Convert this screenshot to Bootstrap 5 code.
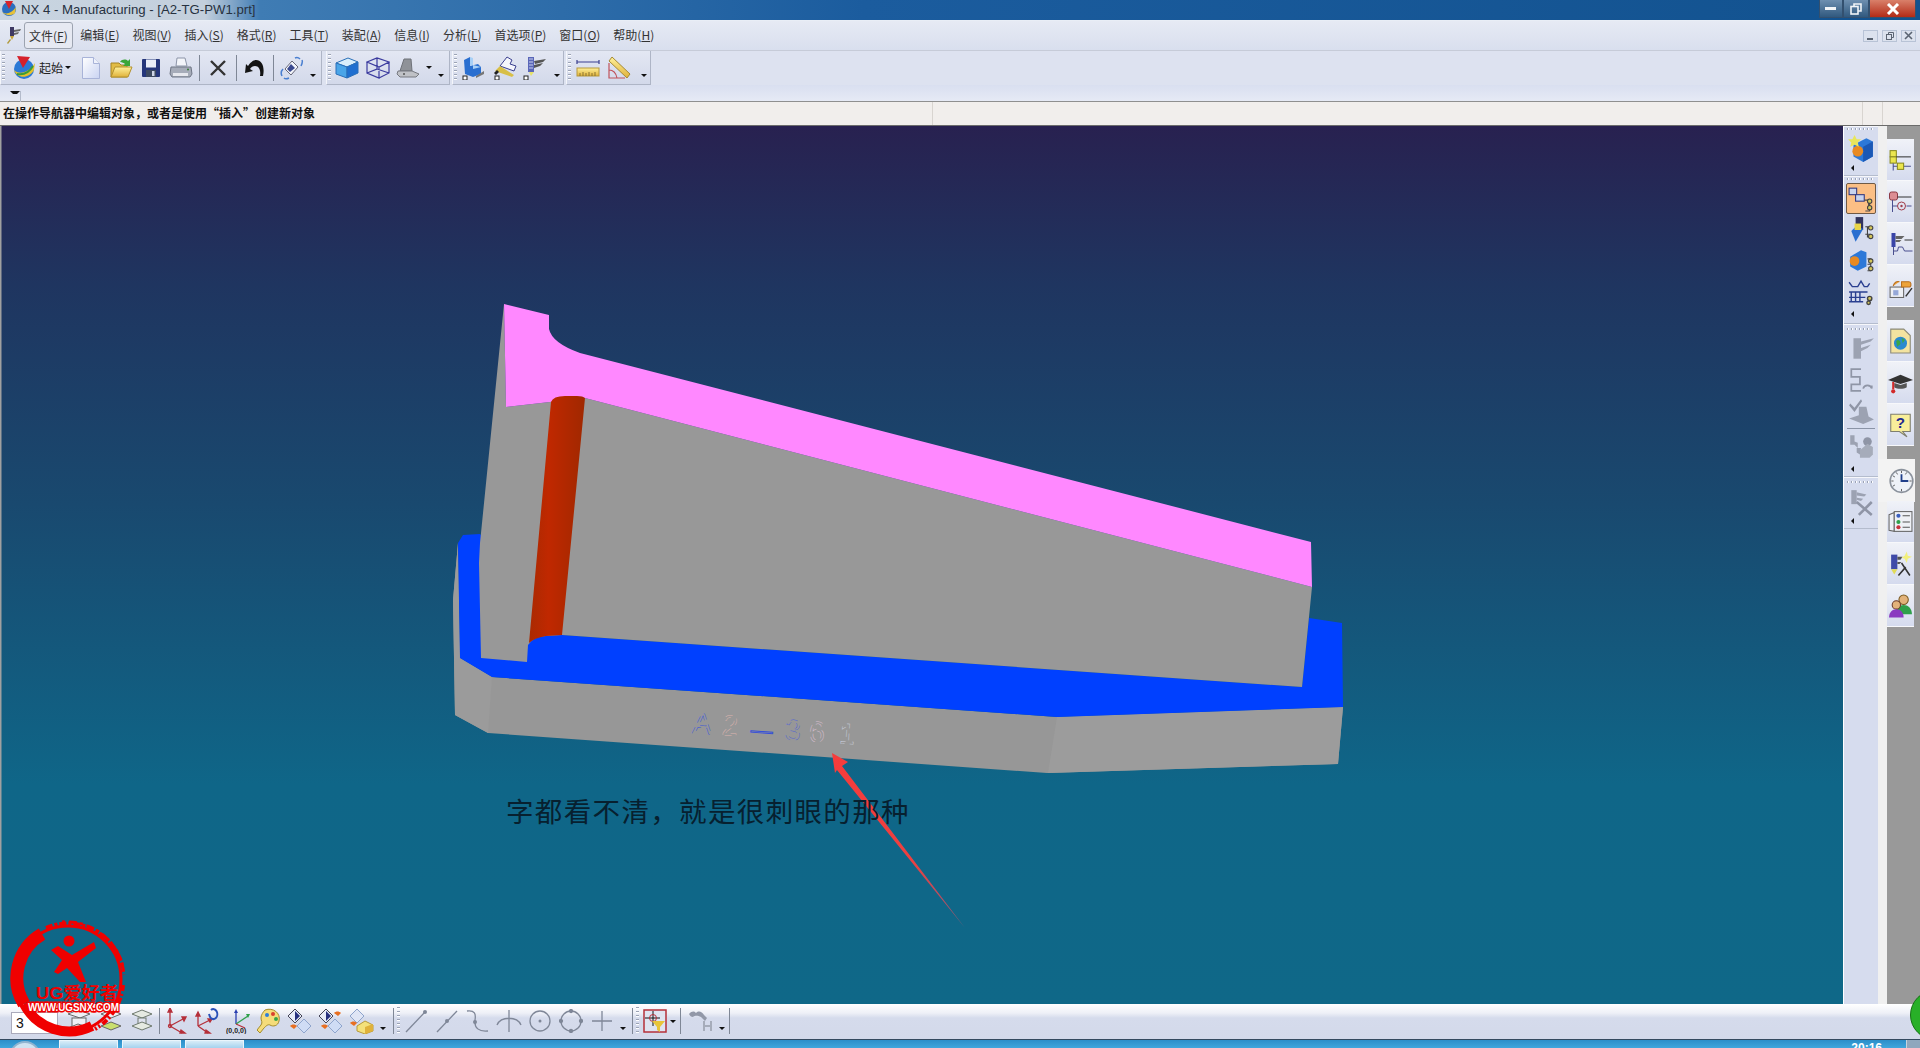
<!DOCTYPE html>
<html lang="zh-CN">
<head>
<meta charset="utf-8">
<title>NX 4 - Manufacturing</title>
<link href="https://cdn.jsdelivr.net/npm/bootstrap@5.3.0/dist/css/bootstrap.min.css" rel="stylesheet">
<style>
    html, body { height: 100%; overflow: hidden; }
    body { font-family: "Liberation Sans", "Noto Sans CJK SC", sans-serif; font-size: 12px; color: #222; background: #dfe4f1; }
    .app-shell { height: 1048px; position: relative; overflow: hidden; }

    .title-strip { height: 21px; flex: none; border-bottom: 1px solid #e9eef6; padding-left: 1px; background: linear-gradient(90deg, #c9d5e1 0, #c3cfdc 205px, #3f7cb4 260px, #1b5c9e 45%, #12528f 100%); font-size: 13.2px; color: #26313f; line-height: 20px; }
    .win-ctl { height: 18px; display: flex; align-items: center; justify-content: center; border: 1px solid #33506f; border-top: 0; }
    .win-min { width: 24px; background: linear-gradient(#6d8fb0, #31597f); }
    .win-max { width: 26px; background: linear-gradient(#6d8fb0, #31597f); }
    .win-close { width: 47px; background: linear-gradient(#d9806a, #b32b17); }

    .menu-strip { height: 29px; flex: none; background: linear-gradient(#e6eaf4, #d9dfee); padding: 0 4px 0 5px !important; font-family: "Noto Sans CJK SC", sans-serif; }
    .menu-strip .navbar-nav .nav-link { font-size: 12px; padding: 3px 5.500px; color: #333; line-height: 17px; border: 1px solid transparent; white-space: nowrap; }
    .menu-strip .navbar-nav .nav-link.is-open { border-color: #9ca3b0; border-radius: 3px; background: #e6e9f2; padding: 4px 4px; margin-right: 1px; }
    .nx-mark { margin-right: 2px; }
    .mdi-ctl { width: 15px; height: 12px; border: 1px solid #b8c3d6; background: #dce2ee; display: flex; align-items: center; justify-content: center; margin-left: 4px; }

    .tool-row { height: 35px; flex: none; background: #dde2f0; border-top: 1px solid #c6cbd8; }
    .tool-group { height: 34px; background: linear-gradient(#e3e7f3, #d3d9ea); border-right: 1px solid #aeb5c6; border-bottom: 1px solid #aeb5c6; border-left: 1px solid #f4f6fb; }
    .group-std { width: 322px; margin-right: 4px; }
    .group-view { width: 124px; margin-right: 2px; }
    .group-cam { width: 112px; margin-right: 2px; }
    .group-meas { width: 85px; }
    .tb-grip { width: 3px; height: 28px; flex: none; margin: 0 1px 0 1px; background: repeating-linear-gradient(#9ba3b5 0 1px, #ffffff 1px 2px, transparent 2px 4px); }
    .tb-cell { width: 30px; height: 30px; flex: none; display: flex; align-items: center; justify-content: center; }
    .tb-cell.wide { width: 31px; }
    .tb-sep { width: 1px; min-height: 26px; height: 26px; flex: none; align-self: center; margin: 0 3px; background: #7f8796; opacity: 1; }
    .tb-more { width: 12px; height: 30px; flex: none; display: flex; align-items: flex-end; justify-content: center; padding-bottom: 6px; }
    .tb-more i, .tb-drop i { display: block; border-left: 3px solid transparent; border-right: 3px solid transparent; border-top: 3px solid #111; }
    .tb-drop { width: 12px; height: 30px; flex: none; display: flex; align-items: center; justify-content: center; }
    .tb-drop.narrow { width: 10px; margin-right: 3px; }
    .globe-ic { margin-left: 6px; flex: none; }
    .tb-label { font-family: "Noto Sans CJK SC", sans-serif; font-size: 12px; color: #222; margin-left: 3px; white-space: nowrap; width: 24px; flex: none; }

    .tool-row-2 { height: 16px; flex: none; background: linear-gradient(#d9dff0, #e6eaf5); border-bottom: 1px solid #8f8f8f; box-sizing: content-box; }
    .tiny-tile { width: 21px; height: 16px; border-right: 1px solid #b4bbcb; padding-left: 4px; }
    .tiny-tile i { display: block; margin: 6px 0 0 6px; border-left: 3px solid transparent; border-right: 3px solid transparent; border-top: 3px solid #111; }

    .hint-strip { height: 23px; flex: none; background: #f1eeec; font-family: "Noto Sans CJK SC", sans-serif; font-weight: 700; font-size: 12px; color: #111; line-height: 22px; padding-left: 3px; border-bottom: 1px solid #6b6b6b; box-sizing: content-box; }
    .hint-main { width: 929px; }
    .hint-cell { border-left: 1px solid #d8d4d0; height: 23px; font-weight: 400; }
    .hint-cell-a { width: 930px; }
    .hint-cell-b { width: 20px; }

    .work-area { height: 878px; flex: none; min-height: 0; }
    .view-pane { width: 1843px; height: 878px; flex: none; display: block; }
    .op-strip { width: 35px; flex: none; background: #d6dcee; border-left: 1px solid #fff; }
    .op-group { border-bottom: 1px solid #b4bccd; border-top: 1px solid #f6f7fb; padding: 1px 0 3px; }
    .op-group.is-cam { padding-bottom: 5px; }
    .op-group.is-idle { padding-top: 3px; }
    .op-group.is-last { padding-top: 3px; }
    .op-grip { height: 2px; margin: 0 3px 3px; background: repeating-linear-gradient(90deg, #9ba3b5 0 1px, #fff 1px 2px, transparent 2px 4px); }
    .op-cell { height: 31px; display: flex; align-items: center; justify-content: center; }
    .op-cell svg { width: 26px; height: 28px; }
    .op-cell.is-on { margin: 3px 2px 0; background: #fbbf85; border: 1px solid #6f5a46; border-radius: 2px; }
    .op-cell.nudge { margin-top: 1px; }
    .op-more { height: 8px; padding-left: 7px; display: flex; align-items: center; }
    .op-more.nudge { margin-top: 3px; }
    .op-more i { display: block; border-top: 3px solid transparent; border-bottom: 3px solid transparent; border-right: 3px solid #111; }
    .op-line { height: 1px; background: #8a93a6; margin: 2px 3px; }
    .gap-col { width: 9px; flex: none; background: #f0f0f0; }
    .res-col { flex: 1 1 auto; background: #999999; padding-top: 13px; }
    .res-tab { width: 27px; height: 42px; display: flex; align-items: center; justify-content: center; background: linear-gradient(#f0f2f8, #d5dbee); border-bottom: 1px solid #f7f8fb; }
    .res-tab svg { width: 25px; height: 26px; }
    .res-gap { height: 13px; }
    .res-clock { width: 37px; height: 43px; background: #f3f3f3; margin-left: -9px; padding-left: 9px; margin-bottom: -1px; border-bottom: 0; }

    .bottom-strip { height: 35px; flex: none; background: linear-gradient(#ffffff 0, #eef0f7 9px, #d5dbec 14px, #d3d9ea 100%); border-bottom: 1px solid #33495f; padding-left: 11px; box-sizing: content-box; }
    .count-box { width: 47px; height: 22px; border: 1px solid #aab; border-radius: 0; padding: 0 0 0 4px; font-size: 14px; line-height: 20px; color: #111; background: #fff; min-height: 0; margin: 0 6px 5px 0; flex: none; }
    .bt-row { margin-bottom: 3px; }
    .bt-cell { width: 31px; height: 30px; flex: none; display: flex; align-items: center; justify-content: center; }
    .bt-cell.snap { width: 25px; }
    .bt-grip { width: 3px; height: 28px; flex: none; margin: 0 0 0 3px; background: repeating-linear-gradient(#9ba3b5 0 1px, #ffffff 1px 2px, transparent 2px 4px); }
    .bt-grip.before-snap { margin-right: 3px; }
    .bt-more { height: 24px; padding-bottom: 3px; }
    .bt-sep-a { margin: 0 0 0 2px; }
    .bt-sep-b { margin: 0 0 0 4px; }
    .bt-sep-c { margin: 0 0 0 3px; }
    .bt-sep-d { margin: 0 4px 0 1px; }
    .bt-sep-e { margin: 0 0 0 1px; }

    .task-strip { height: 8px; flex: none; overflow: hidden; background: linear-gradient(#2b8ec9, #3fa6dc); position: relative; color: #fff; }
    .task-orb { width: 32px; height: 32px; margin: 1px 18px 0 9px; border-radius: 50%; background: #cfe3f1; border: 2px solid #8fb4d0; flex: none; }
    .task-item { width: 59px; height: 8px; margin-right: 4px; background: linear-gradient(#d8ecf8, #a5d2ee); border: 1px solid #eaf5fc; border-bottom: 0; }
    .clock-text { font-size: 12px; line-height: 12px; margin: 2px 24px 0 0; font-weight: 700; }
    .desk-tile { width: 14px; background: #8fa7bd; border-left: 1px solid #c6d4df; }

    .stamp { position: absolute; left: 8px; top: 915px; pointer-events: none; }
    .stamp text { font-family: "Liberation Sans", "Noto Sans CJK SC", sans-serif; font-weight: 700; }
    .stamp .stamp-url { paint-order: stroke; }
    .corner-dot { position: absolute; left: 1910px; top: 990px; width: 50px; height: 50px; background: #28b028; border: 1px solid #157015; }
    .view-note { font-family: "Noto Sans CJK SC", serif; font-size: 27.5px; letter-spacing: 1.35px; fill: #07202f; }
    .part-mark { font-family: "Liberation Sans", sans-serif; font-size: 29px; letter-spacing: 10px; fill: none; stroke-width: .5; stroke-dasharray: 7 5; }
    .part-mark .dash-solid { font-size: 22px; stroke-dasharray: none; stroke-width: .9; }
</style>
</head>
<body>
<svg width="0" height="0" class="position-absolute">
    <defs>
        <linearGradient id="gPage" x1="0" y1="0" x2="1" y2="1"><stop offset="0" stop-color="#ffffff"/><stop offset="1" stop-color="#c9d3f2"/></linearGradient>
        <linearGradient id="gGold" x1="0" y1="0" x2="0" y2="1"><stop offset="0" stop-color="#fff19a"/><stop offset="1" stop-color="#e0b23a"/></linearGradient>
        <linearGradient id="gRod" x1="0" y1="0" x2="1" y2="0"><stop offset="0" stop-color="#a92a02"/><stop offset=".35" stop-color="#c02800"/><stop offset="1" stop-color="#a02800"/></linearGradient>
        <linearGradient id="gSky" x1="0" y1="0" x2="0" y2="1"><stop offset="0" stop-color="#282150"/><stop offset=".18" stop-color="#1f3560"/><stop offset=".43" stop-color="#19496f"/><stop offset=".75" stop-color="#0f6688"/><stop offset="1" stop-color="#0f6888"/></linearGradient>
        <linearGradient id="gArrow" x1="0" y1="0" x2="1" y2="1"><stop offset="0" stop-color="#f63c3c"/><stop offset=".6" stop-color="#ee4040"/><stop offset="1" stop-color="#8d5a78"/></linearGradient>
    </defs>
</svg>

<div class="app-shell d-flex flex-column">
    <!-- title bar -->
    <div class="title-strip d-flex align-items-start">
        <svg width="16" height="18" viewBox="0 0 16 18"><path d="M1 9a7 7 0 0 1 14 0 7 7 0 0 1-14 0z" fill="#2b6fc0"/><path d="M1 12c4 3 10 1 14-5l-1 6c-3 3-9 3-13-1z" fill="#e6c23a"/><path d="M4 1l8 0-4 8z" fill="#d8232a"/></svg>
        <span class="ms-1">NX 4 - Manufacturing - [A2-TG-PW1.prt]</span>
        <div class="ms-auto d-flex me-1">
            <div class="win-ctl win-min"><svg width="12" height="4"><rect width="11" height="3" fill="#f1f4f7"/></svg></div>
            <div class="win-ctl win-max"><svg width="12" height="12" fill="none" stroke="#f1f4f7" stroke-width="1.6"><rect x="1" y="3.500" width="7" height="7.500"/><path d="M4 3V1h7v7H8"/></svg></div>
            <div class="win-ctl win-close"><svg width="14" height="12" stroke="#fff" stroke-width="3"><path d="M2 1l10 10M12 1L2 11"/></svg></div>
        </div>
    </div>

    <!-- menu -->
    <nav class="navbar navbar-expand menu-strip">
        <svg width="17" height="20" viewBox="0 0 17 20" class="nx-mark"><path d="M5 1h4v9H5z" fill="#3f3a63"/><path d="M5 10h4l-2 4z" fill="#c6a53a"/><path d="M9 4l7-1-1 2-6 1zM9 7l5-1-1 2-4 1z" fill="#666"/><path d="M2 17l3-4 1 1-3 4z" fill="#b09a3a"/></svg>
        <ul class="navbar-nav">
            <li class="nav-item"><a class="nav-link is-open" href="#">文件(<u>F</u>)</a></li>
            <li class="nav-item"><a class="nav-link" href="#">编辑(<u>E</u>)</a></li>
            <li class="nav-item"><a class="nav-link" href="#">视图(<u>V</u>)</a></li>
            <li class="nav-item"><a class="nav-link" href="#">插入(<u>S</u>)</a></li>
            <li class="nav-item"><a class="nav-link" href="#">格式(<u>R</u>)</a></li>
            <li class="nav-item"><a class="nav-link" href="#">工具(<u>T</u>)</a></li>
            <li class="nav-item"><a class="nav-link" href="#">装配(<u>A</u>)</a></li>
            <li class="nav-item"><a class="nav-link" href="#">信息(<u>I</u>)</a></li>
            <li class="nav-item"><a class="nav-link" href="#">分析(<u>L</u>)</a></li>
            <li class="nav-item"><a class="nav-link" href="#">首选项(<u>P</u>)</a></li>
            <li class="nav-item"><a class="nav-link" href="#">窗口(<u>O</u>)</a></li>
            <li class="nav-item"><a class="nav-link" href="#">帮助(<u>H</u>)</a></li>
        </ul>
        <div class="ms-auto d-flex">
            <div class="mdi-ctl"><svg width="9" height="8"><rect x="1" y="6" width="6" height="2" fill="#5b6472"/></svg></div>
            <div class="mdi-ctl"><svg width="10" height="9" fill="none" stroke="#5b6472"><rect x="1.500" y="3.500" width="5" height="5"/><path d="M3.500 3V1.500h5v5H7"/></svg></div>
            <div class="mdi-ctl"><svg width="9" height="9" stroke="#5b6472" stroke-width="1.600"><path d="M1 1l7 7M8 1L1 8"/></svg></div>
        </div>
    </nav>

    <!-- main toolbars -->
    <div class="tool-row d-flex">
        <div class="tool-group group-std d-flex align-items-center">
            <div class="tb-grip"></div>
            <svg class="globe-ic" width="24" height="26" viewBox="0 0 24 26"><circle cx="12" cy="14" r="10" fill="#2b79d6"/><path d="M2 15c5 5 15 3 21-7l-1 7c-5 9-17 9-20 0z" fill="#e4c02c"/><path d="M5 19c6 1 12-1 16-8" stroke="#3a9c3a" stroke-width="2" fill="none"/><path d="M5 1l13 1-7 11z" fill="#d5202a"/></svg>
            <span class="tb-label">起始</span>
            <div class="tb-drop narrow"><i></i></div>
            <div class="tb-cell"><svg width="20" height="24" viewBox="0 0 20 24"><path d="M1.500 1.500h11l6 6v15h-17z" fill="url(#gPage)" stroke="#a8b3d8"/><path d="M12.500 1.500v6h6" fill="#eef1fb" stroke="#a8b3d8"/></svg></div>
            <div class="tb-cell"><svg width="24" height="24" viewBox="0 0 24 24"><path d="M2 7h8l2 2h6v12H2z" fill="#e2bc45" stroke="#a48325"/><path d="M6 11h17l-4 10H2z" fill="url(#gGold)" stroke="#b3912f"/><path d="M11 6c2-3 6-3 8-1l2-2v7h-7l2-2c-1-1-3-2-5-2z" fill="#3aa63a"/></svg></div>
            <div class="tb-cell"><svg width="20" height="20" viewBox="0 0 20 20"><rect x="1" y="1" width="18" height="18" rx="1" fill="#25367a"/><rect x="5" y="1.500" width="10" height="8" fill="#e9edf7"/><rect x="5" y="12" width="10" height="7" fill="#3d4a60"/><rect x="11" y="13" width="2.500" height="5" fill="#cfd6e6"/></svg></div>
            <div class="tb-cell"><svg width="24" height="22" viewBox="0 0 24 22"><path d="M8 1l8 0 2 8H7z" fill="#f3f5fa" stroke="#8d95a8"/><path d="M2 10h20l1 7-2 3H3l-2-3z" fill="#a6acb9" stroke="#6f7685"/><rect x="4" y="16" width="15" height="3" fill="#e6e8ee"/><circle cx="19" cy="12.500" r="1" fill="#3a7b3a"/></svg></div>
            <div class="vr tb-sep"></div>
            <div class="tb-cell"><svg width="18" height="18" viewBox="0 0 18 18" stroke="#333" stroke-width="2.400"><path d="M2 2l14 14M16 2L2 16"/></svg></div>
            <div class="vr tb-sep"></div>
            <div class="tb-cell"><svg width="20" height="18" viewBox="0 0 20 18"><path d="M18 17h-3c1-6-1-10-5-10-2 0-4 1-5 3l3 2-8 2 1-9 2 2c2-3 5-6 8-6 6 0 9 7 7 16z" fill="#141414"/></svg></div>
            <div class="vr tb-sep"></div>
            <div class="tb-cell"><svg width="24" height="24" viewBox="0 0 24 24"><path d="M12 5l6 6-7 8-6-6z" fill="#f4f6fb" stroke="#667"/><path d="M11 8l4 4-5 4-3-3z" fill="#3b4a8f"/><path d="M2 20c-1-2-1-5 1-7M22 4c1 2 0 4-1 6M15 2c2-1 4 0 5 1M4 22c1 1 3 1 5 0" stroke="#4a7fd0" stroke-width="1.500" fill="none"/></svg></div>
            <div class="tb-more"><i></i></div>
        </div>
        <div class="tool-group group-view d-flex align-items-center">
            <div class="tb-grip"></div>
            <div class="tb-cell"><svg width="24" height="22" viewBox="0 0 24 22"><path d="M1 6l12-5 10 4-11 5z" fill="#d9eefb" stroke="#2a6fb8"/><path d="M1 6l11 4v11L1 17z" fill="#4aa5e8" stroke="#2a6fb8"/><path d="M12 10l11-5v11l-11 5z" fill="#1f6fd0" stroke="#2a6fb8"/></svg></div>
            <div class="tb-cell wide"><svg width="24" height="22" viewBox="0 0 24 22" fill="none" stroke="#3a3a9e" stroke-width="1.200"><path d="M1 5l10-4 12 4-10 5zM1 5v11l12 5V10M13 21l10-5V5M11 1v11L1 16M11 12l12 4"/></svg></div>
            <div class="tb-cell"><svg width="24" height="20" viewBox="0 0 24 20"><path d="M8 1h7l1 12H4z" fill="#8f9298" stroke="#6f7279"/><path d="M2 13h14l7 3-3 3H4l-3-3z" fill="#bfc1c6" stroke="#767980"/><circle cx="8" cy="16" r="1" fill="#555"/></svg></div>
            <div class="tb-drop"><i></i></div>
            <div class="tb-more"><i></i></div>
        </div>
        <div class="tool-group group-cam d-flex align-items-center">
            <div class="tb-grip"></div>
            <div class="tb-cell wide"><svg width="24" height="24" viewBox="0 0 24 24"><path d="M2 4l6-3v9l8-2 3 3v7l-8 3-8-3z" fill="#2a6fd0"/><path d="M8 1l3 1v7l-3 1zM11 9l8 2-8 2z" fill="#a8d0f6"/><path d="M14 20l8-5v3l-8 4z" fill="#777"/><rect x="1" y="20" width="4" height="4" fill="#fff" stroke="#222"/></svg></div>
            <div class="tb-cell wide"><svg width="24" height="24" viewBox="0 0 24 24"><path d="M7 10l7-9 5 3-2 4 6 2-2 5z" fill="#f5f6fc" stroke="#3a3f8f"/><path d="M2 15l5-5 14 9-2 2z" fill="#d8bf47"/><path d="M1 17l3-3 2 2-3 3z" fill="#222"/><rect x="2" y="20" width="4" height="4" fill="#fff" stroke="#222"/></svg></div>
            <div class="tb-cell"><svg width="24" height="24" viewBox="0 0 24 24"><rect x="5" y="1" width="6" height="15" fill="#5a66b8"/><path d="M6 3h4M6 6h4M6 9h4M6 12h4" stroke="#c8d0ee"/><path d="M11 5l12-2-3 3-8 2zM11 9l9-2-3 3-6 2z" fill="#555"/><path d="M6 16h5l-3 4z" fill="#e7e26a"/><rect x="1" y="20" width="4" height="4" fill="#fff" stroke="#222"/></svg></div>
            <div class="tb-more ms-auto"><i></i></div>
        </div>
        <div class="tool-group group-meas d-flex align-items-center">
            <div class="tb-grip"></div>
            <div class="tb-cell wide"><svg width="24" height="18" viewBox="0 0 24 18"><path d="M1 3h22M1 1v4M23 1v4" stroke="#3a3f8f" stroke-width="1.200" fill="none"/><rect x="1" y="9" width="22" height="8" fill="url(#gGold)" stroke="#b5973c"/><path d="M4 14v3M7 13v4M10 14v3M13 13v4M16 14v3M19 13v4" stroke="#8a7430"/></svg></div>
            <div class="tb-cell wide"><svg width="24" height="24" viewBox="0 0 24 24"><path d="M5 1l18 17-3 4L2 5z" fill="url(#gGold)" stroke="#a58a35"/><path d="M2 7v15h16M2 14c4 0 7 3 8 8" stroke="#c0535a" fill="none" stroke-width="1.200"/></svg></div>
            <div class="tb-more ms-auto"><i></i></div>
        </div>
    </div>
    <div class="tool-row-2"><div class="tiny-tile"><i></i></div></div>

    <!-- cue line -->
    <div class="hint-strip d-flex">
        <div class="hint-main">在操作导航器中编辑对象，或者是使用“插入”创建新对象</div>
        <div class="hint-cell hint-cell-a"></div>
        <div class="hint-cell hint-cell-b"></div>
        <div class="hint-cell flex-grow-1"></div>
    </div>

    <div class="work-area d-flex">
        <!-- graphics window -->
        <svg class="view-pane" viewBox="0 126 1843 878">
            <rect x="0" y="126" width="1843" height="878" fill="url(#gSky)"/>
            <rect x="0" y="126" width="1.500" height="878" fill="#a0a0a0"/>
            <!-- base -->
            <path d="M458 543L453 600L455 715L488 733L1047 773L1338 764L1343 707L1057 717L492 677L460 658Z" fill="#979797"/>
            <path d="M458 543L453 600L455 715L488 733L492 677L460 658Z" fill="#9b9b9b"/>
            <path d="M1057 717L1048 773L1338 764L1343 707Z" fill="#9c9c9c"/>
            <path d="M480 534L463 535L458 543L460 658L492 677L1057 717L1343 707L1342 623L1309 618L1302 687L562 635Z" fill="#0040ff"/>
            <!-- body -->
            <path d="M504 304L480 543L479 563L481 658L527 662L528 645Q534 636 546 636L562 635L1302 687L1312 587L585 398L506 407Z" fill="#989898"/>
            <path d="M504 304L549 315L549 329Q552 343 580 353L1311 542L1312 587L585 398L506 407Z" fill="#ff88ff"/>
            <!-- hole -->
            <path d="M551 402Q553 396 565 396L577 396Q583 396 585 398L562 635L546 636Q534 638 529 643Z" fill="url(#gRod)"/>
            <!-- engraved mark -->
            <text class="part-mark" transform="translate(692 733) rotate(4)"><tspan stroke="#3e58d8">A</tspan><tspan stroke="#d9b2ad">2</tspan><tspan class="dash-solid" stroke="#3650d8" dx="3">—</tspan><tspan stroke="#5366d0" dx="2">3</tspan><tspan stroke="#d8bfd0" dx="-2">6</tspan><tspan stroke="#c5c9d6" dx="4">1</tspan></text>
            <!-- note -->
            <path d="M832 753L848 762L842 766L965 928L837 770L835 773Z" fill="url(#gArrow)"/>
            <text class="view-note" x="506" y="822">字都看不清，就是很刺眼的那种</text>
        </svg>

        <!-- operation strip -->
        <aside class="op-strip">
            <div class="op-group">
                <div class="op-grip"></div>
                <div class="op-cell"><svg viewBox="0 0 24 26"><path d="M5 9l12-6 6 3v14l-9 5-9-5z" fill="#2c78d8"/><path d="M14 25V11l9-5v14z" fill="#1b58b5"/><circle cx="9" cy="15" r="5" fill="#e88a22"/><path d="M6 0l2 4 4 0-3 3 1 4-4-2-4 2 1-4-3-3 4 0z" fill="#e8e65c"/></svg></div>
                <div class="op-more"><i></i></div>
            </div>
            <div class="op-group is-cam">
                <div class="op-grip"></div>
                <div class="op-cell is-on"><svg viewBox="0 0 24 24"><rect x="1" y="2" width="7" height="6" fill="#c8d4ee" stroke="#333a80"/><rect x="7" y="8" width="8" height="6" fill="#c8d4ee" stroke="#333a80"/><path d="M15 13h5v10h-4M19 13v6" fill="none" stroke="#4a4a4a"/><circle cx="20" cy="14" r="2" fill="#d4c65a" stroke="#444"/><circle cx="20" cy="20" r="2" fill="#d4c65a" stroke="#444"/></svg></div>
                <div class="op-cell"><svg viewBox="0 0 24 26"><rect x="7" y="1" width="7" height="12" fill="#32345e"/><path d="M3 14l5-5 6 3-7 12z" fill="#2a6fd0"/><rect x="6" y="7" width="6" height="6" fill="#e8d447"/><path d="M16 10h5M16 17h5M18 10v10" stroke="#444"/><circle cx="21" cy="11" r="2" fill="#d4c65a" stroke="#444"/><circle cx="21" cy="19" r="2" fill="#d4c65a" stroke="#444"/></svg></div>
                <div class="op-cell"><svg viewBox="0 0 24 24"><path d="M2 8l10-6 5 2v13l-8 4-7-4z" fill="#2c78d8"/><circle cx="6" cy="12" r="4.500" fill="#e88a22"/><path d="M18 10h3v11h-3M18 15h3" fill="none" stroke="#444"/><circle cx="21" cy="12" r="2" fill="#d4c65a" stroke="#444"/><circle cx="21" cy="19" r="2" fill="#d4c65a" stroke="#444"/></svg></div>
                <div class="op-cell"><svg viewBox="0 0 24 24" fill="none" stroke="#2a3f90" stroke-width="1.300"><path d="M1 3l3 4 5 0 3-5 3 5h3l2-3"/><path d="M1 12h17M1 17h15M1 21h13M3 12v9M7 12v9M11 12v9"/><circle cx="20" cy="18" r="2" fill="#d4c65a" stroke="#444"/><circle cx="19" cy="22" r="1.600" fill="#d4c65a" stroke="#444"/></svg></div>
                <div class="op-more nudge"><i></i></div>
            </div>
            <div class="op-group is-idle">
                <div class="op-grip"></div>
                <div class="op-cell nudge"><svg viewBox="0 0 24 26"><rect x="5" y="3" width="7" height="19" fill="#9ca2b2"/><path d="M12 6l12-3-3 3-9 3zM12 12l9-3-3 3-6 3z" fill="#9ca2b2"/></svg></div>
                <div class="op-cell"><svg viewBox="0 0 24 26" fill="none" stroke="#8f95a6" stroke-width="1.600"><path d="M12 3H3v7h8v7H3v6h9M14 21c1-4 7-4 8 0M22 21v-3"/></svg></div>
                <div class="op-cell"><svg viewBox="0 0 24 26"><path d="M2 6l4 4 6-8 1 2-7 10-5-6z" fill="#8f95a6"/><path d="M10 9h7l2 9 5 3-10 4-13-5 9-3z" fill="#9ca2b2"/></svg></div>
                <div class="op-line"></div>
                <div class="op-cell"><svg viewBox="0 0 24 26"><path d="M2 2h4v6l3 1v5l-3-3H2zM8 14h4l-1 6-3-2z" fill="#9ca2b2"/><circle cx="18" cy="8" r="4" fill="#8f95a6"/><path d="M11 16l7-6 5 3v7l-3 3H11z" fill="#a6acba"/></svg></div>
                <div class="op-more nudge"><i></i></div>
            </div>
            <div class="op-group is-last">
                <div class="op-grip"></div>
                <div class="op-cell"><svg viewBox="0 0 24 26"><rect x="3" y="2" width="5" height="13" fill="#9ca2b2"/><path d="M8 4l9 2-2 2-7-1zM8 9l6 1-2 2-4-1z" fill="#9ca2b2"/><path d="M8 13l14 12M22 13L10 25" stroke="#8f95a6" stroke-width="2.400"/></svg></div>
                <div class="op-more"><i></i></div>
            </div>
        </aside>
        <div class="gap-col"></div>

        <!-- resource bar -->
        <aside class="res-col">
            <div class="res-tab"><svg viewBox="0 0 24 24"><rect x="2" y="3" width="6" height="6" fill="#ebe64e" stroke="#8a8a1e"/><rect x="2" y="9" width="6" height="6" fill="#ebe64e" stroke="#8a8a1e"/><path d="M8 9h14" stroke="#333"/><path d="M5 15v7M5 18h4M15 18h7" stroke="#4a4f8f"/><rect x="9" y="15" width="6" height="6" fill="#ebe64e" stroke="#8a8a1e"/></svg></div>
            <div class="res-tab"><svg viewBox="0 0 24 26"><rect x="1" y="3" width="8" height="8" rx="2" fill="#dc8d93" stroke="#8c3a44"/><path d="M9 8h14" stroke="#333"/><path d="M4 11v12M4 17h5M18 17h5" stroke="#4a4f8f"/><circle cx="13" cy="17" r="4" fill="none" stroke="#a13c4a"/><circle cx="13" cy="17" r="1.200" fill="#a13c4a"/></svg></div>
            <div class="res-tab"><svg viewBox="0 0 24 26"><rect x="3" y="2" width="4" height="14" fill="#3a45a8"/><path d="M7 5l9 0-3 3H7zM7 9l6 0-2 2H7z" fill="#666"/><path d="M16 9h8" stroke="#333"/><path d="M5 16v8M5 20h4l1-4h4l2 4h8" stroke="#4a4f8f" fill="none"/></svg></div>
            <div class="res-tab"><svg viewBox="0 0 24 24"><rect x="2" y="13" width="13" height="10" fill="#eef0f5" stroke="#666"/><path d="M5 12c1-4 4-5 6-4M13 8h7c2 0 3 3 1 5h-8z" fill="#eda33a" stroke="#b96f1f"/><path d="M5 16h5v5H5z" fill="#96a8d8"/><path d="M17 22l6-8" stroke="#333" stroke-width="1.400"/></svg></div>
            <div class="res-gap"></div>
            <div class="res-tab"><svg viewBox="0 0 20 24"><path d="M1 1h12l6 6v16H1z" fill="#f3e3a0" stroke="#8b8a7a"/><circle cx="10" cy="14" r="6" fill="#2a8ad0"/><path d="M6 12c2-2 4 0 4 2s-3 2-3 4zM11 9l3 2-2 3z" fill="#3aa648"/></svg></div>
            <div class="res-tab"><svg viewBox="0 0 24 24"><path d="M0 9l12-5 12 5-12 4z" fill="#333"/><path d="M6 12v4c3 2 9 2 12 0v-4l-6 2z" fill="#555"/><path d="M5 11v7" stroke="#d22a2a" stroke-width="2"/><circle cx="5" cy="20" r="2" fill="#d22a2a"/></svg></div>
            <div class="res-tab"><svg viewBox="0 0 20 24"><path d="M1 2h18v16H12l4 5-7-5H1z" fill="#f8ee9a" stroke="#7f7f70"/><text x="10" y="15" text-anchor="middle" font-family="Liberation Sans" font-weight="700" font-size="14" fill="#1f2a8f">?</text></svg></div>
            <div class="res-gap"></div>
            <div class="res-tab res-clock"><svg viewBox="0 0 22 22"><circle cx="11" cy="11" r="10" fill="#eef2f8" stroke="#8b929c" stroke-width="1.400"/><path d="M11 2v2M11 18v2M2 11h2M18 11h2M6.500 3.500l1 1.700M15.500 3.500l-1 1.700M3.500 6.500l1.700 1M3.500 15.500l1.700-1" stroke="#555" stroke-width=".8"/><path d="M11 5v6h6" stroke="#1f3f8a" stroke-width="1.600" fill="none"/></svg></div>
            <div class="res-tab"><svg viewBox="0 0 24 24"><path d="M1 5l5-2v18l-5-1z" fill="#eef0f5" stroke="#666"/><rect x="6" y="2" width="17" height="19" fill="#eef0f5" stroke="#666"/><circle cx="10" cy="6" r="2" fill="#3a5fc0"/><circle cx="10" cy="12" r="2" fill="#2fa04a"/><circle cx="10" cy="17" r="2" fill="#c8323c"/><path d="M14 6h7M14 12h7M14 17h7" stroke="#555"/></svg></div>
            <div class="res-tab"><svg viewBox="0 0 24 24"><rect x="3" y="3" width="6" height="14" fill="#3f4aa8"/><path d="M9 5h5l-2 3H9zM9 10h4l-2 2H9z" fill="#555"/><path d="M18 0l1 4 4 1-4 2-1 4-2-4-3-1 3-2z" fill="#f2ef7c"/><path d="M13 11l8 12M17 15l-7 8" stroke="#333" stroke-width="1.500"/><path d="M3 17h6l-3 5z" fill="#e2db58"/></svg></div>
            <div class="res-tab"><svg viewBox="0 0 24 24"><circle cx="15" cy="6" r="4.500" fill="#e2b27a" stroke="#7a5a20"/><path d="M7 20c0-6 4-9 8-9s8 3 8 9z" fill="#2fa04a"/><circle cx="8" cy="11" r="4" fill="#e2b27a" stroke="#6a3a2a"/><path d="M1 23c0-5 3-8 7-8s7 3 7 8z" fill="#8a3ac0"/></svg></div>
        </aside>
    </div>

    <!-- bottom toolbar -->
    <div class="bottom-strip d-flex align-items-end">
        <input class="form-control count-box" value="3" aria-label="count">
        <div class="d-flex align-items-center bt-row">
            <div class="bt-cell"><svg width="28" height="24" viewBox="0 0 28 24" fill="#eef0f5" stroke="#666"><path d="M2 5l10-4 12 4-10 4z"/><rect x="6" y="9" width="14" height="9"/><path d="M2 19l10-4 12 4-10 4z"/></svg></div>
            <div class="bt-cell"><svg width="24" height="24" viewBox="0 0 24 24" fill="#eef0f5" stroke="#666"><path d="M2 5l10-4 10 4-10 4z"/><path d="M2 17l10-4 10 4-10 4z" fill="#c9df6f"/></svg></div>
            <div class="bt-cell"><svg width="24" height="24" viewBox="0 0 24 24" fill="#e5eae2" stroke="#6f7a6f"><path d="M2 5l10-4 10 4-10 4z"/><rect x="8" y="9" width="8" height="6" fill="#dfe3ef"/><path d="M2 17l10-4 10 4-10 4z"/></svg></div>
            <div class="vr tb-sep bt-sep-a"></div>
            <div class="bt-cell"><svg width="22" height="26" viewBox="0 0 22 26" fill="none" stroke="#b5303a" stroke-width="1.300"><path d="M5 18V3M5 18l13-7M5 18l12 7"/><path d="M5 0l-2 4h4zM21 9l-4 0 2 4zM20 25l-4-3-1 3z" fill="#b5303a"/><circle cx="5" cy="18" r="1.500"/></svg></div>
            <div class="bt-cell"><svg width="24" height="26" viewBox="0 0 24 26" fill="none" stroke="#b5303a" stroke-width="1.300"><path d="M3 18V7M3 18l12-6M3 18l10 7"/><path d="M3 4l-2 4h4zM17 11l-4 0 2 3zM15 25l-4-3-1 3z" fill="#b5303a"/><path d="M16 2a4 5 0 1 1-1 7M15 9l-1-3" stroke="#2a52b8" stroke-width="2"/></svg></div>
            <div class="bt-cell"><svg width="24" height="26" viewBox="0 0 24 26" fill="none" stroke-width="1.300"><path d="M10 16V4" stroke="#2a3fb0"/><path d="M10 1L8 5h4z" fill="#2a3fb0"/><path d="M10 16l12-8" stroke="#2fa04a"/><path d="M24 6l-4 0 2 4z" fill="#2fa04a"/><path d="M10 16l9 4" stroke="#b5303a"/><text x="0" y="25" font-family="Liberation Sans" font-size="7" font-weight="700" fill="#222">(0,0,0)</text></svg></div>
            <div class="bt-cell"><svg width="24" height="26" viewBox="0 0 24 26"><path d="M8 2c8-3 16 3 14 11-1 5-6 6-9 4-2-1-4 1-6 3l-4 5-3-3 4-5c2-3 0-4 0-7 0-3 2-6 4-8z" fill="#f5dc7a" stroke="#a48c2a"/><circle cx="10" cy="7" r="2" fill="#2f7fd8"/><circle cx="16" cy="6" r="2" fill="#d8402f"/><circle cx="19" cy="11" r="2" fill="#38a648"/></svg></div>
            <div class="bt-cell"><svg width="24" height="26" viewBox="0 0 24 26"><path d="M7 1l7 7-7 7-7-7z" fill="#e7ecf8" stroke="#445"/><path d="M7 3l5 5-5 5z" fill="#26307e"/><path d="M16 11l7 7-7 7-7-7z" fill="#cfdcf5" stroke="#8ea4cc"/><path d="M2 18c2-2 5-2 7 0l-3 3z" fill="#e86f22"/></svg></div>
            <div class="bt-cell"><svg width="24" height="26" viewBox="0 0 24 26"><path d="M7 1l7 7-7 7-7-7z" fill="#e7ecf8" stroke="#445"/><path d="M7 3l5 5-5 5z" fill="#26307e"/><path d="M16 11l7 7-7 7-7-7z" fill="#cfdcf5" stroke="#8ea4cc"/><path d="M2 18c2-2 5-2 7 0l-3 3zM15 5c2-2 5-2 7 0l-3 3z" fill="#e86f22"/></svg></div>
            <div class="bt-cell"><svg width="24" height="26" viewBox="0 0 24 26"><path d="M7 1l7 7-7 7-7-7z" fill="#dfe5f5" stroke="#8ea4cc"/><path d="M7 18l8-5 8 4v6l-8 3-8-3z" fill="#f4e17a" stroke="#b79a3a"/><path d="M15 19l8-3v7l-8 3z" fill="#e0b23a"/><path d="M0 15c2-2 5-2 7 0l-3 3z" fill="#e86f22"/></svg></div>
            <div class="tb-more bt-more"><i></i></div>
            <div class="vr tb-sep bt-sep-b"></div>
            <div class="bt-grip"></div>
            <div class="bt-cell"><svg width="24" height="24" viewBox="0 0 24 24" fill="none" stroke="#7f8798" stroke-width="1.300"><path d="M2 23L21 3"/><circle cx="21" cy="3" r="2" fill="#7f8798" stroke="none"/></svg></div>
            <div class="bt-cell"><svg width="24" height="24" viewBox="0 0 24 24" fill="none" stroke="#7f8798" stroke-width="1.300"><path d="M2 23L22 2"/><circle cx="12" cy="12" r="2" fill="#7f8798" stroke="none"/></svg></div>
            <div class="bt-cell"><svg width="24" height="24" viewBox="0 0 24 24" fill="none" stroke="#7f8798" stroke-width="1.300"><path d="M1 2c8-1 9 3 8 9-1 8 4 12 13 11"/><circle cx="9" cy="13" r="2" fill="#7f8798" stroke="none"/></svg></div>
            <div class="bt-cell"><svg width="26" height="24" viewBox="0 0 26 24" fill="none" stroke="#7f8798" stroke-width="1.300"><path d="M1 16c4-9 20-9 24 0M13 1v22"/></svg></div>
            <div class="bt-cell"><svg width="24" height="24" viewBox="0 0 24 24" fill="none" stroke="#7f8798" stroke-width="1.300"><circle cx="12" cy="12" r="10"/><circle cx="12" cy="12" r="1.500" fill="#7f8798" stroke="none"/></svg></div>
            <div class="bt-cell"><svg width="24" height="24" viewBox="0 0 24 24" fill="#7f8798" stroke="#7f8798" stroke-width="1.300"><circle cx="12" cy="12" r="10" fill="none"/><circle cx="12" cy="2" r="1.500"/><circle cx="12" cy="22" r="1.500"/><circle cx="2" cy="12" r="1.500"/><circle cx="22" cy="12" r="1.500"/></svg></div>
            <div class="bt-cell"><svg width="22" height="22" viewBox="0 0 22 22" stroke="#7f8798" stroke-width="1.300"><path d="M1 11h20M11 1v20"/></svg></div>
            <div class="tb-more bt-more"><i></i></div>
            <div class="vr tb-sep bt-sep-c"></div>
            <div class="bt-grip before-snap"></div>
            <div class="bt-cell snap"><svg width="24" height="24" viewBox="0 0 24 24"><rect x="1" y="1" width="22" height="22" fill="#dfe4f1" stroke="#b5303a" stroke-width="1.500"/><path d="M2 9h15M10 2v15" stroke="#111"/><circle cx="10" cy="9" r="3.500" fill="none" stroke="#b5303a"/><path d="M9 12h13l-5 6v5l-3-2v-3z" fill="#e8c53a"/></svg></div>
            <div class="tb-drop"><i></i></div>
            <div class="vr tb-sep bt-sep-d"></div>
            <div class="bt-cell"><svg width="28" height="24" viewBox="0 0 28 24"><path d="M2 5c3-3 5-3 7-1 3-3 6-1 8 2l3 3-2 3-4-4c-3-1-5-2-8 0-2 0-3-1-4-3z" fill="#9298a8"/><path d="M17 12v10M24 12v10M17 17h7" stroke="#a6acba" stroke-width="2"/></svg></div>
            <div class="tb-more bt-more"><i></i></div>
            <div class="vr tb-sep bt-sep-e"></div>
        </div>
    </div>

    <!-- taskbar -->
    <div class="task-strip d-flex">
        <div class="task-orb"></div>
        <div class="task-item"></div>
        <div class="task-item"></div>
        <div class="task-item"></div>
        <div class="clock-text ms-auto">20:16</div>
        <div class="desk-tile"></div>
    </div>

    <!-- watermark -->
    <svg class="stamp" width="122" height="125" viewBox="8 915 122 125">
        <g fill="none" stroke="#f00000">
            <circle cx="68" cy="979" r="53" stroke-width="3"/>
            <path d="M42 934A51 51 0 0 0 24 1004" stroke-width="13"/>
            <path d="M24 1004A51 51 0 0 0 92 1026" stroke-width="10"/>
            <path d="M46 928A56 56 0 0 1 122 965" stroke-width="4" stroke-dasharray="7 2 3 2"/>
            <path d="M62 922A58 58 0 0 1 124 975" stroke-width="3" stroke-dasharray="3 4 8 3"/>
            <path d="M123 985A56 56 0 0 1 95 1029" stroke-width="4" stroke-dasharray="6 3 2 2"/>
        </g>
        <circle cx="69" cy="941" r="5.500" fill="#f00000"/>
        <path d="M51 950L58 946L72 955L94 942L96 948L78 962L86 982L80 982L67 968L58 974L54 972L62 960Z" fill="#f00000"/>
        <text x="36" y="999" font-size="17" textLength="82" lengthAdjust="spacingAndGlyphs" fill="#f00000">UG爱好者</text>
        <text class="stamp-url" x="28" y="1011" font-size="11" textLength="91" lengthAdjust="spacingAndGlyphs" fill="#fff" stroke="#f00000" stroke-width="3">WWW.UGSNX.COM</text>
    </svg>
    <div class="corner-dot rounded-circle"></div>
</div>
<script src="https://cdn.jsdelivr.net/npm/bootstrap@5.3.0/dist/js/bootstrap.bundle.min.js"></script>
</body>
</html>
